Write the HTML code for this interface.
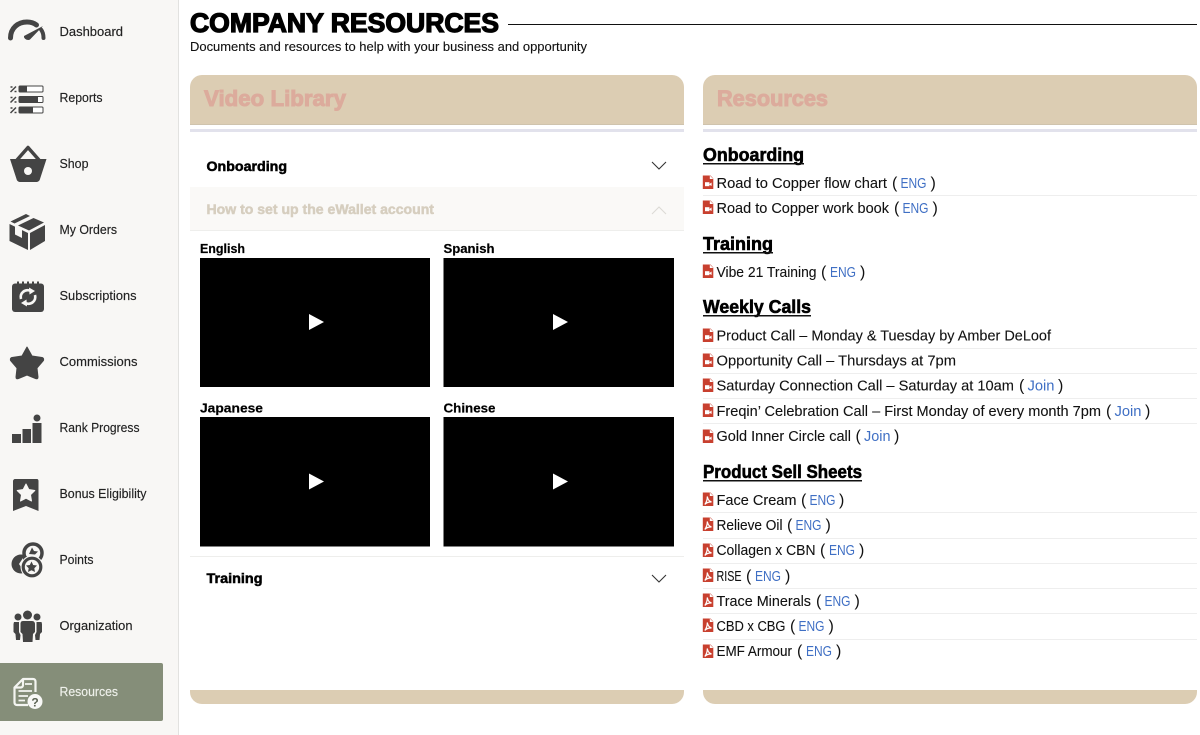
<!DOCTYPE html>
<html lang="en"><head><meta charset="utf-8"><title>Company Resources</title>
<style>
html,body{margin:0;padding:0;background:#fff;width:1200px;height:735px;overflow:hidden}
svg{display:block;filter:blur(.3px)}
text{font-family:"Liberation Sans",sans-serif;fill:#000}
.nav{font-size:13px;fill:#222;stroke:#222;stroke-width:.15px}
.item{font-size:15px;fill:#111;stroke:#111;stroke-width:.1px}
.p{font-size:16px;fill:#111}
.lnk{font-size:15px;fill:#3f6fc4}
.h{font-size:18.500px;font-weight:bold;stroke:#000;stroke-width:.6px}
.ph{font-size:22px;font-weight:bold;stroke-width:1px}
.acc{font-size:14px;font-weight:bold;stroke:#000;stroke-width:.5px}
.lang{font-size:13px;font-weight:bold;stroke:#000;stroke-width:.2px}
.ic{fill:#444}
</style></head><body>
<svg width="1200" height="735" viewBox="0 0 1200 735" xmlns="http://www.w3.org/2000/svg">
<defs>
<g id="vid"><path d="M-.2 -.5H7.500L10.300 2.500V13H-.2Z" fill="#c8402f"/><path d="M6.800 -.5V3H10.300Z" fill="#fff"/><rect x="2" y="6.200" width="4.400" height="4" fill="#fff"/><path d="M6.400 8L8.600 6.500V10L6.400 8.800Z" fill="#fff"/></g>
<g id="pdf"><path d="M-.2 -.5H7.500L10.300 2.500V13H-.2Z" fill="#c8402f"/><path d="M6.800 -.5V3H10.300Z" fill="#fff"/><path d="M4.300 3.500C4.800 6 5.500 8 8.500 9C6 8.800 3.600 9.400 1.800 11.500C3.400 9.200 4.400 6.500 4.300 3.500Z" fill="none" stroke="#fff" stroke-width="1.200"/></g>
<path id="play" d="M0 0L15 8L0 16Z" fill="#fff"/>
<path id="chev" d="M0 0L7 7L14 0" fill="none" stroke="#333" stroke-width="1.100"/>
</defs>

<!-- sidebar -->
<rect width="178" height="735" fill="#f8f7f5"/>
<rect x="178" width="1" height="735" fill="#e2e2e0"/>
<rect x="-6" y="663" width="169" height="58" rx="2" fill="#858e79"/>

<text class="nav" x="59.500" y="36" textLength="63.500" lengthAdjust="spacingAndGlyphs">Dashboard</text>
<text class="nav" x="59.500" y="102" textLength="43" lengthAdjust="spacingAndGlyphs">Reports</text>
<text class="nav" x="59.500" y="168" textLength="29" lengthAdjust="spacingAndGlyphs">Shop</text>
<text class="nav" x="59.500" y="234" textLength="57.500" lengthAdjust="spacingAndGlyphs">My Orders</text>
<text class="nav" x="59.500" y="300" textLength="77" lengthAdjust="spacingAndGlyphs">Subscriptions</text>
<text class="nav" x="59.500" y="366" textLength="78" lengthAdjust="spacingAndGlyphs">Commissions</text>
<text class="nav" x="59.500" y="432" textLength="80" lengthAdjust="spacingAndGlyphs">Rank Progress</text>
<text class="nav" x="59.500" y="498" textLength="87" lengthAdjust="spacingAndGlyphs">Bonus Eligibility</text>
<text class="nav" x="59.500" y="564" textLength="34" lengthAdjust="spacingAndGlyphs">Points</text>
<text class="nav" x="59.500" y="630" textLength="73" lengthAdjust="spacingAndGlyphs">Organization</text>
<text class="nav" x="59.500" y="696" textLength="58.500" lengthAdjust="spacingAndGlyphs" style="fill:#eef0ea;stroke:#eef0ea">Resources</text>

<!-- dashboard icon -->
<path d="M10.500 38C10.500 28 18 22 27 22C31 22 34 23 36.500 25" fill="none" stroke="#444" stroke-width="5" stroke-linecap="round"/>
<path d="M24 36L43 26L30 39.500C28 41 23.500 39 24 36Z" class="ic"/>
<path d="M41 29.500C43 32 43.500 35 43.500 38" fill="none" stroke="#444" stroke-width="4" stroke-linecap="round"/>
<!-- reports icon -->
<g>
<rect x="19" y="86" width="24" height="6" rx="1" fill="#fff" stroke="#444"/><rect x="19" y="86" width="8" height="6" class="ic"/>
<rect x="19" y="96.500" width="24" height="6" rx="1" fill="#fff" stroke="#444"/><rect x="19" y="96.500" width="19" height="6" class="ic"/>
<rect x="19" y="107" width="24" height="6" rx="1" fill="#fff" stroke="#444"/><rect x="19" y="107" width="14" height="6" class="ic"/>
<path d="M10.500 92L16 86.500M10.500 87H12.500M14.500 91.500H16.500M10.500 102.500L16 97M10.500 97.500H12.500M14.500 102H16.500M10.500 113L16 107.500M10.500 108H12.500M14.500 112.500H16.500" stroke="#444" stroke-width="1.500" fill="none"/>
</g>
<!-- shop icon -->
<path d="M17 160L28 147.500L39 160" fill="none" stroke="#444" stroke-width="3.500" stroke-linejoin="round"/>
<path d="M10 159H46.500L40 179C39.500 181 38 182 36 182H20.500C18.500 182 17 181 16.500 179Z" class="ic" fill-rule="evenodd"/>
<circle cx="28" cy="171" r="4" fill="#f8f7f5"/>
<!-- orders icon -->
<path d="M9.500 224L28 233V250L9.500 241Z" class="ic"/>
<path d="M30 233L45 225V241L30 250Z" class="ic"/>
<path d="M10.500 221.500L26 214L30 216L14.500 223.500Z" class="ic"/>
<path d="M18 225.500L33.500 218L44 222.500L29 230.500Z" class="ic"/>
<path d="M15 226L22 229.500V238L15 234.500Z" fill="#f8f7f5"/>
<!-- subscriptions icon -->
<rect x="12" y="283.500" width="32" height="28.500" rx="3" class="ic"/>
<path d="M17 282.500H19M22 282.500H24M27 282.500H29M32 282.500H34M37 282.500H39" stroke="#444" stroke-width="2"/>
<path d="M21 299C19.500 293 25 288.500 31 291M35 295C36.500 301 31 305.500 25 303" fill="none" stroke="#f8f7f5" stroke-width="2.600"/>
<path d="M29 287.500L35 291L29.500 294.500ZM27 306.500L21 303L26.500 299.500Z" fill="#f8f7f5"/>
<!-- star icon -->
<path d="M27 347L32 356L42 357.500C44 358 44 360 43 361L37 368L38 377C38 379 37 379 35.500 378.500L27 375L18.500 378.500C17 379 16 379 16 377L17 368L11 361C10 360 10 358 12 357.500L22 356Z" class="ic" stroke="#444" stroke-linejoin="round"/>
<!-- rank icon -->
<rect x="12" y="434" width="9" height="9" class="ic"/><rect x="22.500" y="429" width="8.500" height="14" class="ic"/><rect x="32.500" y="423" width="9" height="20" class="ic"/>
<circle cx="37" cy="418" r="3.500" class="ic"/>
<!-- bonus icon -->
<path d="M13 481C13 480 14 479 15 479H37C38 479 38.500 480 38.500 481V511L26 506L13 511Z" class="ic"/>
<path d="M26 484L28.800 489.500L34.800 490.500L30.500 494.800L31.500 501L26 498.200L20.500 501L21.500 494.800L17.200 490.500L23.200 489.500Z" fill="#f8f7f5" stroke="#f8f7f5" stroke-linejoin="round"/>
<!-- points icon -->
<circle cx="33" cy="553" r="9" fill="none" stroke="#444" stroke-width="3.500"/>
<path d="M32 547.500L34 551L38 551.500L35 554.500L29 554Z" class="ic"/>
<circle cx="21" cy="564" r="9.500" class="ic"/>
<path d="M23 558L19 564L23 570Z" fill="#f8f7f5"/>
<circle cx="32" cy="567" r="11.500" fill="#f8f7f5"/>
<circle cx="32" cy="567" r="8.800" fill="none" stroke="#444" stroke-width="3.200"/>
<path d="M31.500 561.500L33.200 565L37 565.500L34.300 568.200L35 572L31.500 570.200L28 572L28.700 568.200L26 565.500L29.800 565Z" class="ic"/>
<!-- organization icon -->
<circle cx="27.500" cy="615" r="4.500" class="ic"/>
<circle cx="18" cy="617" r="3.500" class="ic"/>
<circle cx="37" cy="617" r="3.500" class="ic"/>
<path d="M23 621H32C34 621 35 622.500 35 624V632L33 634L32.500 642H23L22.500 634L20.500 632V624C20.500 622.500 21 621 23 621Z" class="ic"/>
<path d="M14 622H19V632L20.500 635L20 640H16L15.500 634L13.500 632V624Z" class="ic"/>
<path d="M36.500 622H41.500L42 624V632L40 634L39.500 640H35.500L35 635L36.500 632Z" class="ic"/>
<!-- resources icon -->
<path d="M23 679H33C34.500 679 35.500 680 35.500 681.500V692M28 705H17C15.500 705 14.500 704 14.500 702.500V687.500L23 679V685C23 686.500 22 687.500 20.500 687.500H14.500" fill="none" stroke="#f4f5f1" stroke-width="2.200" stroke-linejoin="round"/>
<path d="M25 684H32M18.500 691H32M18.500 696H28M18.500 700.500H25" stroke="#f4f5f1" stroke-width="1.800" fill="none"/>
<circle cx="35" cy="701.500" r="7.500" fill="#f8f8f6"/>
<text x="35" y="706.500" text-anchor="middle" style="font-size:12px;font-weight:bold;fill:#5b6353">?</text>

<!-- header -->
<text x="190" y="32" textLength="309" lengthAdjust="spacingAndGlyphs" style="font-size:26.500px;font-weight:bold;stroke:#000;stroke-width:1.300px">COMPANY RESOURCES</text>
<rect x="508" y="24" width="689" height="1" fill="#111"/>
<text x="190" y="51" textLength="397" lengthAdjust="spacingAndGlyphs" style="font-size:13px;fill:#111;stroke:#111;stroke-width:.12px">Documents and resources to help with your business and opportunity</text>

<!-- left panel -->
<path d="M190 124V87A12 12 0 0 1 202 75H672A12 12 0 0 1 684 87V124Z" fill="#dccdb3"/>
<rect x="190" y="124" width="494" height="1" fill="#cfc3ad"/>
<rect x="190" y="129" width="494" height="3" fill="#e2e2ec"/>
<text class="ph" x="204" y="106" textLength="142" lengthAdjust="spacingAndGlyphs" style="fill:#dcab9c;stroke:#dcab9c">Video Library</text>

<text class="acc" x="206.500" y="171" textLength="80.500" lengthAdjust="spacingAndGlyphs">Onboarding</text>
<use href="#chev" x="652" y="162"/>
<rect x="190" y="187" width="494" height="43" fill="#faf9f7"/>
<rect x="190" y="230" width="494" height="1" fill="#eeeeec"/>
<text class="acc" x="206.500" y="214" textLength="227.500" lengthAdjust="spacingAndGlyphs" style="fill:#d6cebf;stroke:#d6cebf">How to set up the eWallet account</text>
<path d="M652 214L659 207L666 214" fill="none" stroke="#dcdad5" stroke-width="1.100"/>

<text class="lang" x="200" y="253" textLength="45" lengthAdjust="spacingAndGlyphs">English</text>
<text class="lang" x="443.500" y="253" textLength="51" lengthAdjust="spacingAndGlyphs">Spanish</text>
<rect x="200" y="258" width="230" height="129" fill="#000"/>
<rect x="443.500" y="258" width="230.500" height="129" fill="#000"/>
<text class="lang" x="200" y="412.500" textLength="63" lengthAdjust="spacingAndGlyphs">Japanese</text>
<text class="lang" x="443.500" y="412.500" textLength="52" lengthAdjust="spacingAndGlyphs">Chinese</text>
<rect x="200" y="417" width="230" height="129.500" fill="#000"/>
<rect x="443.500" y="417" width="230.500" height="129.500" fill="#000"/>
<use href="#play" x="309" y="314"/><use href="#play" x="553" y="314"/>
<use href="#play" x="309" y="473.500"/><use href="#play" x="553" y="473.500"/>
<rect x="190" y="556" width="494" height="1" fill="#eeeeec"/>
<text class="acc" x="206.500" y="583" textLength="56" lengthAdjust="spacingAndGlyphs">Training</text>
<use href="#chev" x="652" y="575"/>
<path d="M190 690H684V692A12 12 0 0 1 672 704H202A12 12 0 0 1 190 692Z" fill="#dccdb3"/>

<!-- right panel -->
<path d="M703 124V87A12 12 0 0 1 715 75H1185A12 12 0 0 1 1197 87V124Z" fill="#dccdb3"/>
<rect x="703" y="124" width="494" height="1" fill="#cfc3ad"/>
<rect x="703" y="129" width="494" height="3" fill="#e2e2ec"/>
<text class="ph" x="717" y="106" textLength="111" lengthAdjust="spacingAndGlyphs" style="fill:#dcab9c;stroke:#dcab9c">Resources</text>
<path d="M703 690H1197V692A12 12 0 0 1 1185 704H715A12 12 0 0 1 703 692Z" fill="#dccdb3"/>

<g fill="#111">
<text class="h" x="703" y="161" textLength="101" lengthAdjust="spacingAndGlyphs">Onboarding</text><rect x="703" y="163" width="101" height="1.500"/>
<text class="h" x="703" y="250" textLength="70" lengthAdjust="spacingAndGlyphs">Training</text><rect x="703" y="252" width="70" height="1.500"/>
<text class="h" x="703" y="313" textLength="108" lengthAdjust="spacingAndGlyphs">Weekly Calls</text><rect x="703" y="315" width="108" height="1.500"/>
<text class="h" x="703" y="478" textLength="159" lengthAdjust="spacingAndGlyphs">Product Sell Sheets</text><rect x="703" y="480" width="159" height="1.500"/>
</g>

<g fill="#eeeeee">
<rect x="703" y="195" width="494" height="1"/><rect x="703" y="348" width="494" height="1"/><rect x="703" y="373" width="494" height="1"/><rect x="703" y="398" width="494" height="1"/><rect x="703" y="423" width="494" height="1"/>
<rect x="703" y="512" width="494" height="1"/><rect x="703" y="538" width="494" height="1"/><rect x="703" y="563" width="494" height="1"/><rect x="703" y="588" width="494" height="1"/><rect x="703" y="613" width="494" height="1"/><rect x="703" y="639" width="494" height="1"/>
</g>

<use href="#vid" x="703" y="176"/>
<text class="item" x="716.500" y="188" textLength="170.500" lengthAdjust="spacingAndGlyphs">Road to Copper flow chart</text><text class="p" x="892" y="188">(</text><text class="lnk" x="900.500" y="188" textLength="26" lengthAdjust="spacingAndGlyphs">ENG</text><text class="p" x="930.500" y="188">)</text>
<use href="#vid" x="703" y="201"/>
<text class="item" x="716.500" y="213" textLength="172.500" lengthAdjust="spacingAndGlyphs">Road to Copper work book</text><text class="p" x="894" y="213">(</text><text class="lnk" x="902.500" y="213" textLength="26" lengthAdjust="spacingAndGlyphs">ENG</text><text class="p" x="932.500" y="213">)</text>
<use href="#vid" x="703" y="265"/>
<text class="item" x="716.500" y="277" textLength="100" lengthAdjust="spacingAndGlyphs">Vibe 21 Training</text><text class="p" x="821" y="277">(</text><text class="lnk" x="830" y="277" textLength="26" lengthAdjust="spacingAndGlyphs">ENG</text><text class="p" x="860" y="277">)</text>

<use href="#vid" x="703" y="329"/>
<text class="item" x="716.500" y="340.500" textLength="334.500" lengthAdjust="spacingAndGlyphs">Product Call – Monday &amp; Tuesday by Amber DeLoof</text>
<use href="#vid" x="703" y="354"/>
<text class="item" x="716.500" y="365.500" textLength="239.500" lengthAdjust="spacingAndGlyphs">Opportunity Call – Thursdays at 7pm</text>
<use href="#vid" x="703" y="379"/>
<text class="item" x="716.500" y="390.500" textLength="297.500" lengthAdjust="spacingAndGlyphs">Saturday Connection Call – Saturday at 10am</text><text class="p" x="1019" y="390.500">(</text><text class="lnk" x="1027.500" y="390.500" textLength="27" lengthAdjust="spacingAndGlyphs">Join</text><text class="p" x="1058" y="390.500">)</text>
<use href="#vid" x="703" y="404"/>
<text class="item" x="716.500" y="416" textLength="384.500" lengthAdjust="spacingAndGlyphs">Freqin’ Celebration Call – First Monday of every month 7pm</text><text class="p" x="1106" y="416">(</text><text class="lnk" x="1114.500" y="416" textLength="27" lengthAdjust="spacingAndGlyphs">Join</text><text class="p" x="1145" y="416">)</text>
<use href="#vid" x="703" y="430"/>
<text class="item" x="716.500" y="441" textLength="134.500" lengthAdjust="spacingAndGlyphs">Gold Inner Circle call</text><text class="p" x="855.500" y="441">(</text><text class="lnk" x="864" y="441" textLength="26.500" lengthAdjust="spacingAndGlyphs">Join</text><text class="p" x="894" y="441">)</text>

<use href="#pdf" x="703" y="493"/>
<text class="item" x="716.500" y="505" textLength="80" lengthAdjust="spacingAndGlyphs">Face Cream</text><text class="p" x="801" y="505">(</text><text class="lnk" x="809.500" y="505" textLength="26" lengthAdjust="spacingAndGlyphs">ENG</text><text class="p" x="839" y="505">)</text>
<use href="#pdf" x="703" y="518"/>
<text class="item" x="716.500" y="530" textLength="66" lengthAdjust="spacingAndGlyphs">Relieve Oil</text><text class="p" x="787" y="530">(</text><text class="lnk" x="795.500" y="530" textLength="26" lengthAdjust="spacingAndGlyphs">ENG</text><text class="p" x="825.500" y="530">)</text>
<use href="#pdf" x="703" y="544"/>
<text class="item" x="716.500" y="555" textLength="99" lengthAdjust="spacingAndGlyphs">Collagen x CBN</text><text class="p" x="820" y="555">(</text><text class="lnk" x="829" y="555" textLength="26" lengthAdjust="spacingAndGlyphs">ENG</text><text class="p" x="859" y="555">)</text>
<use href="#pdf" x="703" y="569"/>
<text class="item" x="716.500" y="581" textLength="25" lengthAdjust="spacingAndGlyphs">RISE</text><text class="p" x="746" y="581">(</text><text class="lnk" x="755" y="581" textLength="26" lengthAdjust="spacingAndGlyphs">ENG</text><text class="p" x="785" y="581">)</text>
<use href="#pdf" x="703" y="594"/>
<text class="item" x="716.500" y="606" textLength="94.500" lengthAdjust="spacingAndGlyphs">Trace Minerals</text><text class="p" x="816" y="606">(</text><text class="lnk" x="824.500" y="606" textLength="26" lengthAdjust="spacingAndGlyphs">ENG</text><text class="p" x="854.500" y="606">)</text>
<use href="#pdf" x="703" y="619"/>
<text class="item" x="716.500" y="631" textLength="69" lengthAdjust="spacingAndGlyphs">CBD x CBG</text><text class="p" x="790" y="631">(</text><text class="lnk" x="798.500" y="631" textLength="26" lengthAdjust="spacingAndGlyphs">ENG</text><text class="p" x="828.500" y="631">)</text>
<use href="#pdf" x="703" y="645"/>
<text class="item" x="716.500" y="656" textLength="75.500" lengthAdjust="spacingAndGlyphs">EMF Armour</text><text class="p" x="797" y="656">(</text><text class="lnk" x="806" y="656" textLength="26" lengthAdjust="spacingAndGlyphs">ENG</text><text class="p" x="836" y="656">)</text>
</svg>
</body></html>
